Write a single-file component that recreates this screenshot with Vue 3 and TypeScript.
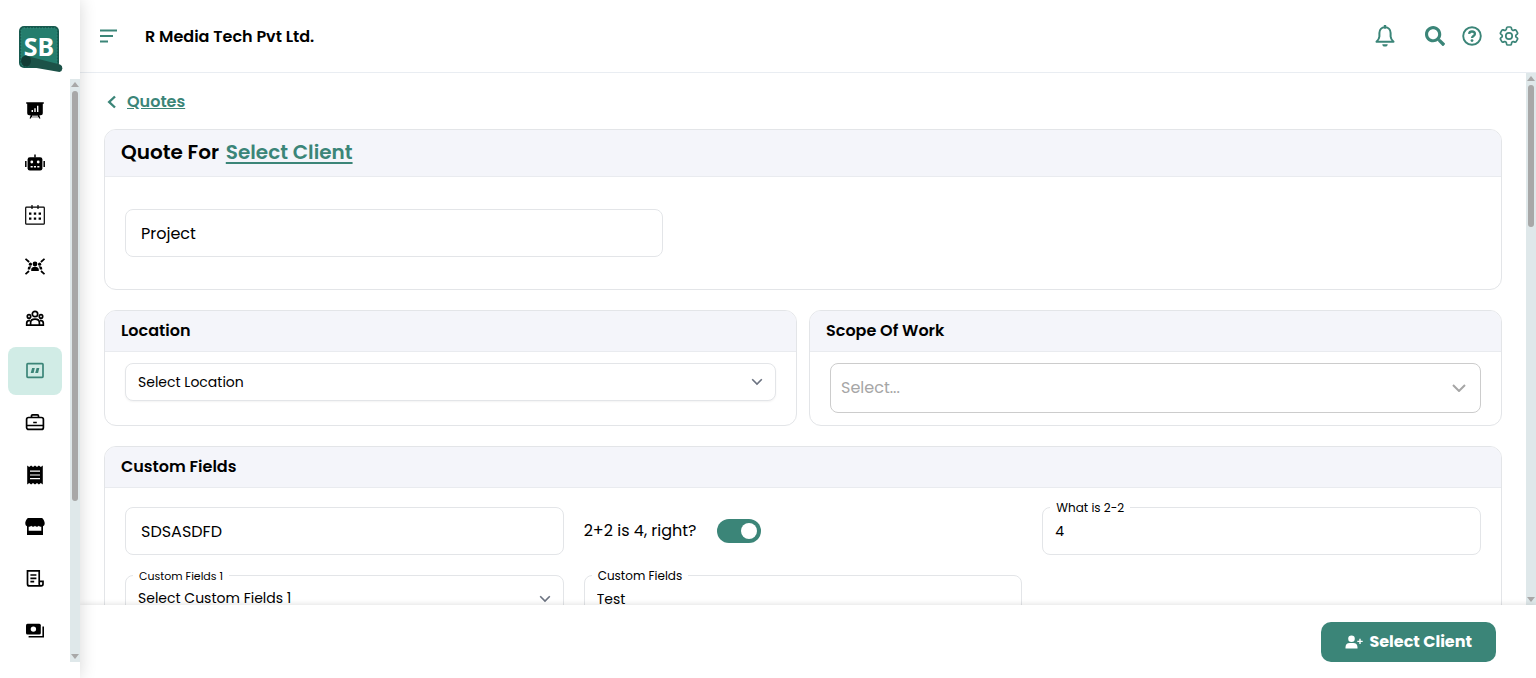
<script setup lang="ts">
import { ref } from 'vue'

interface NavItem {
  name: string
  icon: string
}

const navItems: NavItem[] = [
  {
    name: 'Dashboard',
    icon: '<path d="M1.2 1.2h17.6v1.6h-1v9.4a2 2 0 0 1-2 2h-1.4l1 3.3h-1.3l-.4-1.2H6.3l-.4 1.2H4.6l1-3.3H4.2a2 2 0 0 1-2-2V2.800h-1z" fill="currentColor"/><path d="M7.300 11V9M10 11V7.200M12.700 11V4.800" stroke="#fff" stroke-width="1.400"/><path d="M7 15.200h6" stroke="#fff" stroke-width="1"/>',
  },
  {
    name: 'Assistant',
    icon: '<rect x="2.600" y="4.200" width="14.800" height="13.300" rx="2.200" fill="currentColor"/><path d="M10 1.500v3M.8 8v6M19.200 8v6" stroke="currentColor" stroke-width="1.500"/><circle cx="6.800" cy="9" r="1.400" fill="#fff"/><circle cx="13.200" cy="9" r="1.400" fill="#fff"/><path d="M5.600 13.700h2.100M8.900 13.700H11M12.300 13.700h2.100" stroke="#fff" stroke-width="1.400"/>',
  },
  {
    name: 'Calendar',
    icon: '<rect x=".7" y="2.200" width="18.600" height="17" rx=".8" fill="none" stroke="currentColor" stroke-width="1.200"/><path d="M7 0v4M13 0v4" stroke="currentColor" stroke-width="1.200"/><path d="M4 8.600h2.400M8.800 8.600h2.400M13.600 8.600H16M4 13.600h2.400M8.800 13.600h2.400M13.600 13.600H16" stroke="currentColor" stroke-width="2.400"/>',
  },
  {
    name: 'Leads',
    icon: '<path d="M.5 1.800l3.600 3.200M19.500 1.800l-3.600 3.200M.5 17.200L4 14M19.500 17.200L16 14" stroke="currentColor" stroke-width="1.800"/><g fill="currentColor"><circle cx="10" cy="7" r="2.400"/><circle cx="5.400" cy="7.200" r="1.600"/><circle cx="14.600" cy="7.200" r="1.600"/><path d="M6.200 14v-1.400c0-2 1.600-2.900 3.800-2.900s3.800.9 3.800 2.900V14zM2.800 12.400v-1c0-1.500 1-2.200 2.500-2.200.5 0 .9.100 1.200.3-.8.600-1.200 1.400-1.300 2.900zM17.200 12.400v-1c0-1.500-1-2.200-2.500-2.200-.5 0-.9.100-1.200.3.800.6 1.200 1.400 1.300 2.900z"/></g>',
  },
  {
    name: 'Clients',
    icon: '<g fill="none" stroke="currentColor" stroke-width="1.700"><circle cx="10" cy="5" r="2.700"/><circle cx="4" cy="7.400" r="1.700"/><circle cx="16" cy="7.400" r="1.700"/><path d="M5.600 16.200v-2.400c0-2.300 1.700-3.600 4.400-3.600s4.400 1.300 4.400 3.600v2.400zM5.600 16.200H1.700v-2.200c0-1.800 1.100-2.700 3.300-2.700M14.400 16.200h3.900v-2.200c0-1.800-1.100-2.700-3.300-2.700"/></g>',
  },
  {
    name: 'Quotes',
    icon: '<rect x="2" y="2.700" width="16" height="13.600" rx=".8" fill="none" stroke="currentColor" stroke-width="1.700"/><path d="M7.100 7h2.700L8.600 12H5.700zM11.600 7h2.700L13.100 12H10.200z" fill="currentColor"/>',
  },
  {
    name: 'Jobs',
    icon: '<g fill="none" stroke="currentColor" stroke-width="1.700"><rect x="1.600" y="4.500" width="16.800" height="11.900" rx="2"/><path d="M6.500 4.400V2.900c0-.7.4-1.100 1.100-1.100h4.800c.7 0 1.100.4 1.100 1.100v1.500M1.600 12.500h16.800M8.200 9.500h3.600"/></g>',
  },
  {
    name: 'Invoices',
    icon: '<path d="M2.200.4l2 1.500L6.100.4 8 1.900 10 .4l2 1.500L13.900.4l1.900 1.500 2-1.500v19l-2-1.500-1.900 1.500-1.900-1.500-2 1.500-2-1.500-1.900 1.500-1.900-1.500-2 1.500z" fill="currentColor"/><path d="M5 6.200h10M5 10h10M5 13.700h10" stroke="#fff" stroke-width="1.200"/>',
  },
  {
    name: 'Store',
    icon: '<path d="M3.200 1h13.600c1.200 0 2.900 3.400 2.900 5.300 0 1.600-.6 2.600-1.700 2.900V18H2V9.200C.9 8.900.3 7.900.3 6.300.3 4.400 2 1 3.200 1z" fill="currentColor"/><path d="M3.700 9.800c1.200 0 1.900-.4 2.500-1 .8 1.200 3 1.200 3.800 0 .8 1.200 3 1.200 3.800 0 .6.600 1.300 1 2.500 1v4H3.700z" fill="#fff"/>',
  },
  {
    name: 'Reports',
    icon: '<g fill="none" stroke="currentColor" stroke-width="1.700"><path d="M16 16.900H4.500a2 2 0 0 1-2-2V1.900h11.700V15a1.900 1.900 0 0 0 3.800 0v-2.700h-3.800M5.400 6h6M5.400 9.300h6M5.400 12.700h3.800"/></g>',
  },
  {
    name: 'Payments',
    icon: '<rect x="1" y="2.800" width="14.800" height="10.700" rx="1.500" fill="currentColor"/><circle cx="8.400" cy="8.100" r="2.700" fill="#fff"/><path d="M18.200 5.500v10.200H3.600" fill="none" stroke="currentColor" stroke-width="1.600"/>',
  },
]

const activeItem = ref('Quotes')
const project = ref('Project')
const customText = ref('SDSASDFD')
const confirmed = ref(true)
const difference = ref('4')
const customValue = ref('Test')
const scope = ref('')
</script>

<template>
  <div class="app">
    <aside class="sidebar">
      <div class="brand">
        <svg class="logo" viewBox="0 0 46 48" role="img" aria-label="SB">
          <rect x="1" y="1" width="40" height="42" rx="5" fill="#17594e" />
          <rect x="3" y="3" width="36" height="38" rx="3" fill="#247d6d" stroke="#38927f" stroke-width="1" stroke-dasharray="1 2" />
          <text x="21" y="31" class="logo-text" text-anchor="middle" fill="#fff">SB</text>
          <path d="M7 30.500L42 39.500a4 4 0 0 1-.5 7.500L7 41z" fill="#1c5248" />
          <ellipse cx="8" cy="36" rx="5" ry="5.500" fill="#123c35" />
        </svg>
      </div>
      <div class="nav-area">
        <nav class="nav" aria-label="Main">
          <button
            v-for="item in navItems"
            :key="item.name"
            type="button"
            class="nav-item"
            :class="{ active: item.name === activeItem }"
            :aria-label="item.name"
            @click="activeItem = item.name"
          >
            <svg viewBox="0 0 20 20" class="icon-20" v-html="item.icon"></svg>
          </button>
        </nav>
        <div class="track" aria-hidden="true">
          <span class="arrow up"></span>
          <span class="thumb nav-thumb"></span>
          <span class="arrow down"></span>
        </div>
      </div>
    </aside>

    <div class="main">
      <header class="topbar">
        <button type="button" class="icon-button" aria-label="Toggle menu">
          <svg class="menu-icon" viewBox="0 0 18 14" stroke="currentColor" stroke-width="2">
            <path d="M0 1.500h17M0 7h13M0 12.500h8" />
          </svg>
        </button>
        <h1 class="company">R Media Tech Pvt Ltd.</h1>
        <div class="actions">
          <button type="button" class="icon-button bell" aria-label="Notifications">
            <svg viewBox="0 0 20 22" class="bell-icon">
              <path d="M10 2.300c-3.500 0-5.600 2.400-5.600 5.700v3.500c0 2.200-1.300 3.600-2.900 5.200h17c-1.600-1.600-2.900-3-2.900-5.200V8c0-3.300-2.100-5.700-5.600-5.700z" fill="none" stroke="currentColor" stroke-width="2" stroke-linejoin="round" />
              <path d="M10 .6v2" stroke="currentColor" stroke-width="2.400" stroke-linecap="round" />
              <path d="M7.300 19.200h5.400a2.700 2.400 0 0 1-5.400 0z" fill="currentColor" />
            </svg>
          </button>
          <button type="button" class="icon-button" aria-label="Search">
            <svg viewBox="0 0 512 512" class="icon-20">
              <path fill="currentColor" d="M505 442.700L405.300 343c-4.500-4.500-10.600-7-17-7H372c27.600-35.300 44-79.700 44-128C416 93.100 322.900 0 208 0S0 93.100 0 208s93.100 208 208 208c48.300 0 92.700-16.400 128-44v16.300c0 6.400 2.500 12.500 7 17l99.700 99.700c9.400 9.400 24.600 9.400 33.900 0l28.300-28.300c9.400-9.400 9.400-24.600.1-34zM208 336c-70.700 0-128-57.200-128-128 0-70.700 57.200-128 128-128 70.700 0 128 57.200 128 128 0 70.700-57.200 128-128 128z" />
            </svg>
          </button>
          <button type="button" class="icon-button" aria-label="Help">
            <svg viewBox="0 0 20 20" class="icon-20">
              <circle cx="10" cy="10" r="8.800" fill="none" stroke="currentColor" stroke-width="1.900" />
              <path d="M7.100 7.900c.2-1.600 1.200-2.400 2.900-2.400s2.900.9 2.900 2.400c0 2.200-2.900 2-2.900 4.200" fill="none" stroke="currentColor" stroke-width="2.300" />
              <circle cx="10" cy="14.600" r="1.400" fill="currentColor" />
            </svg>
          </button>
          <button type="button" class="icon-button" aria-label="Settings">
            <svg viewBox="2 2 20 20" class="icon-20" fill="none" stroke="currentColor" stroke-width="1.700">
              <path d="M9.594 3.940c.09-.542.56-.94 1.110-.94h2.593c.55 0 1.020.398 1.110.94l.213 1.281c.063.374.313.686.645.87.074.04.147.083.22.127.325.196.72.257 1.075.124l1.217-.456a1.125 1.125 0 0 1 1.370.49l1.296 2.247a1.125 1.125 0 0 1-.26 1.431l-1.003.827c-.293.241-.438.613-.43.992a7.723 7.723 0 0 1 0 .255c-.008.378.137.75.43.991l1.004.827c.424.35.534.955.26 1.430l-1.298 2.247a1.125 1.125 0 0 1-1.369.491l-1.217-.456c-.355-.133-.75-.072-1.076.124a6.470 6.470 0 0 1-.22.128c-.331.183-.581.495-.644.869l-.213 1.281c-.09.543-.56.94-1.110.94h-2.594c-.55 0-1.019-.398-1.110-.94l-.213-1.281c-.062-.374-.312-.686-.644-.87a6.520 6.520 0 0 1-.22-.127c-.325-.196-.72-.257-1.076-.124l-1.217.456a1.125 1.125 0 0 1-1.369-.49l-1.297-2.247a1.125 1.125 0 0 1 .26-1.431l1.004-.827c.292-.24.437-.613.43-.991a6.932 6.932 0 0 1 0-.255c.007-.38-.138-.751-.43-.992l-1.004-.827a1.125 1.125 0 0 1-.26-1.430l1.297-2.247a1.125 1.125 0 0 1 1.370-.491l1.216.456c.356.133.751.072 1.076-.124.072-.044.146-.086.22-.128.332-.183.582-.495.644-.869l.214-1.280Z" />
              <circle cx="12" cy="12" r="3.200" />
            </svg>
          </button>
        </div>
      </header>

      <div class="viewport">
        <main class="content">
          <a href="#quotes" class="back">
            <svg viewBox="0 0 10 14" class="back-icon" fill="none" stroke="currentColor" stroke-width="2.400">
              <path d="M8 1.500L2.200 7 8 12.500" />
            </svg>
            <span>Quotes</span>
          </a>

          <section class="card">
            <h2 class="card-head large">Quote For <a href="#client">Select Client</a></h2>
            <div class="project-body">
              <input v-model="project" class="control roomy project" aria-label="Project" />
            </div>
          </section>

          <div class="pair">
            <section class="card">
              <h2 class="card-head"><label for="location">Location</label></h2>
              <div class="select-body">
                <div class="select-wrap">
                  <select id="location" class="control compact">
                    <option>Select Location</option>
                  </select>
                  <svg class="chevron" viewBox="0 0 12 8"><path d="M1.200 1.200L6 6l4.800-4.800" /></svg>
                </div>
              </div>
            </section>
            <section class="card">
              <h2 class="card-head"><label for="scope">Scope Of Work</label></h2>
              <div class="select-body">
                <div class="select-wrap">
                  <select id="scope" v-model="scope" class="control tall">
                    <option value="">Select...</option>
                  </select>
                  <svg class="chevron wide" viewBox="0 0 14 8"><path d="M1 1l6 6 6-6" /></svg>
                </div>
              </div>
            </section>
          </div>

          <section class="card">
            <h2 class="card-head">Custom Fields</h2>
            <div class="fields">
              <input v-model="customText" class="control roomy" aria-label="SDSASDFD" />
              <label class="switch-row">
                <span>2+2 is 4, right?</span>
                <input v-model="confirmed" type="checkbox" class="switch" />
              </label>
              <div class="field">
                <label for="difference">What is 2-2</label>
                <input id="difference" v-model="difference" class="control" />
              </div>
              <div class="field select-wrap">
                <label for="custom-select" class="small">Custom Fields 1</label>
                <select id="custom-select" class="control raised">
                  <option>Select Custom Fields 1</option>
                </select>
                <svg class="chevron" viewBox="0 0 12 8"><path d="M1.200 1.200L6 6l4.800-4.800" /></svg>
              </div>
              <div class="field">
                <label for="custom-value">Custom Fields</label>
                <input id="custom-value" v-model="customValue" class="control" />
              </div>
            </div>
          </section>
        </main>
        <div class="track" aria-hidden="true">
          <span class="arrow up"></span>
          <span class="thumb page-thumb"></span>
          <span class="arrow down"></span>
        </div>
      </div>

      <footer class="footer">
        <button type="button" class="primary">
          <svg viewBox="0 0 18 14" class="user-icon" fill="currentColor">
            <circle cx="6.500" cy="3.700" r="3.300" />
            <path d="M.5 13.500v-1.300c0-2.700 1.600-4.200 4.200-4.200h3.600c2.600 0 4.200 1.500 4.200 4.200v1.300zM14.300 3.700h1.400v2h2v1.400h-2v2h-1.400v-2h-2V5.700h2z" />
          </svg>
          Select Client
        </button>
      </footer>
    </div>
  </div>
</template>

<style>
body {
  margin: 0;
}
</style>

<style scoped>
.app {
  --teal: #3b8578;
  --line: #e3e5e8;
  display: flex;
  height: 100vh;
  overflow: hidden;
  background: #fff;
  color: #000;
  font-family: Poppins, Inter, "Noto Sans", sans-serif;
  font-size: 16px;
  line-height: 24px;
}

.app * {
  box-sizing: border-box;
}

button,
input,
select {
  font: inherit;
  color: inherit;
}

button {
  border: 0;
  padding: 0;
  background: none;
  cursor: pointer;
}

svg {
  display: block;
}

.icon-20 {
  width: 20px;
  height: 20px;
}

.sidebar {
  display: flex;
  flex: none;
  flex-direction: column;
  width: 80px;
  padding-bottom: 16px;
  background: #fff;
  box-shadow: 0 0 16px rgba(0, 0, 0, 0.16);
  z-index: 2;
}

.brand {
  flex: none;
  height: 79px;
  padding: 25px 0 0 18px;
}

.logo {
  width: 46px;
  height: 48px;
}

.logo-text {
  font-family: "Noto Sans", sans-serif;
  font-size: 25px;
  font-weight: 700;
}

.nav-area {
  display: flex;
  flex: 1;
  min-height: 0;
}

.nav {
  display: flex;
  flex: 1;
  flex-direction: column;
  gap: 4px;
  padding: 8px 8px 0;
  overflow: hidden;
}

.nav-item {
  display: flex;
  flex: none;
  align-items: center;
  justify-content: center;
  height: 48px;
  border-radius: 8px;
}

.nav-item.active {
  background: #d1ece6;
  color: var(--teal);
}

.track {
  display: flex;
  flex: none;
  flex-direction: column;
  align-items: center;
  width: 10px;
  padding: 3px 0;
  background: #dfe8ea;
}

.arrow {
  border: 4px solid transparent;
}

.arrow.up {
  border-top: 0;
  border-bottom: 5px solid #a8a8a8;
}

.arrow.down {
  margin-top: auto;
  border-bottom: 0;
  border-top: 5px solid #a8a8a8;
}

.thumb {
  width: 6px;
  margin-top: 4px;
  border-radius: 3px;
  background: #a8a8a8;
}

.nav-thumb {
  height: 71%;
}

.page-thumb {
  height: 27%;
}

.main {
  display: flex;
  flex: 1;
  flex-direction: column;
  min-width: 0;
}

.topbar {
  display: flex;
  flex: none;
  align-items: center;
  height: 73px;
  padding: 0 17px 0 20px;
  border-bottom: 1px solid #e9edf2;
}

.icon-button {
  color: var(--teal);
}

.menu-icon {
  width: 18px;
  height: 14px;
}

.company {
  margin: 0 0 0 27px;
  padding-top: 2px;
  font-size: 16px;
  font-weight: 600;
}

.actions {
  display: flex;
  align-items: center;
  gap: 17px;
  margin-left: auto;
}

.bell {
  margin-right: 13px;
}

.bell-icon {
  width: 20px;
  height: 22px;
}

.viewport {
  display: flex;
  flex: 1;
  min-height: 0;
}

.content {
  display: flex;
  flex: 1;
  flex-direction: column;
  gap: 20px;
  min-width: 0;
  padding: 17px 24px 0;
  overflow: hidden;
}

.back {
  display: flex;
  align-items: center;
  align-self: flex-start;
  gap: 10px;
  margin-bottom: -5px;
  padding-left: 3px;
  color: var(--teal);
  font-weight: 600;
}

.back-icon {
  width: 10px;
  height: 14px;
}

.card {
  flex: none;
  min-width: 0;
  overflow: hidden;
  border: 1px solid var(--line);
  border-radius: 12px;
}

.card-head {
  margin: 0;
  padding: 8px 16px;
  border-bottom: 1px solid #e9ebef;
  background: #f4f5fa;
  font-size: 16px;
  font-weight: 600;
}

.card-head.large {
  padding: 10px 16px 12px;
  font-size: 20px;
}

.card-head a {
  margin-left: 2px;
  color: var(--teal);
  text-underline-offset: 3px;
}

.project-body {
  padding: 32px 20px;
}

.project {
  width: calc(40% - 4px);
}

.pair {
  display: grid;
  grid-template-columns: 1fr 1fr;
  gap: 12px;
}

.select-body {
  padding: 11px 20px 12px;
}

.control {
  display: block;
  width: 100%;
  height: 48px;
  padding: 0 12px;
  border: 1px solid var(--line);
  border-radius: 8px;
  outline: 0;
  background: #fff;
  appearance: none;
  font-size: 14px;
}

.control.roomy {
  padding: 0 15px;
  font-size: 16px;
}

.control.project {
  width: calc(40% - 4px);
}

.control.compact {
  height: 38px;
  box-shadow: 0 1px 2px rgba(0, 0, 0, 0.05);
}

.control.raised {
  padding-bottom: 2px;
}

.control.tall {
  height: 50px;
  padding: 0 10px;
  border-color: #ccc;
  color: #a6a6a6;
  font-size: 16px;
}

.select-wrap {
  position: relative;
}

.chevron {
  position: absolute;
  top: 50%;
  right: 13px;
  width: 12px;
  height: 8px;
  transform: translateY(-50%);
  fill: none;
  stroke: #6b7280;
  stroke-width: 1.600;
  pointer-events: none;
}

.chevron.wide {
  right: 15px;
  width: 14px;
  stroke: #a6a6a6;
  stroke-width: 2;
}

.fields {
  display: grid;
  grid-template-columns: repeat(3, 1fr);
  gap: 20px;
  padding: 19px 20px;
}

.field {
  position: relative;
}

.field > label {
  position: absolute;
  top: -8px;
  left: 8px;
  padding: 0 6px;
  background: #fff;
  font-size: 12px;
  line-height: 18px;
}

.field > label.small {
  font-size: 11px;
}

.switch-row {
  display: flex;
  align-items: center;
  gap: 20px;
}

.switch {
  display: flex;
  align-items: center;
  justify-content: flex-start;
  width: 44px;
  height: 24px;
  margin: 0;
  padding: 4px;
  border-radius: 12px;
  background: #c4c9cc;
  appearance: none;
}

.switch::before {
  width: 16px;
  height: 16px;
  border-radius: 50%;
  background: #fff;
  content: "";
}

.switch:checked {
  justify-content: flex-end;
  background: var(--teal);
}

.footer {
  display: flex;
  flex: none;
  align-items: center;
  justify-content: flex-end;
  height: 73px;
  padding: 0 40px;
  background: #fff;
  box-shadow: 0 0 6px rgba(0, 0, 0, 0.15);
  z-index: 1;
}

.primary {
  display: flex;
  align-items: center;
  gap: 6px;
  height: 40px;
  padding: 0 24px;
  border-radius: 10px;
  background: var(--teal);
  color: #fff;
  font-weight: 700;
}

.user-icon {
  width: 18px;
  height: 14px;
}
</style>
